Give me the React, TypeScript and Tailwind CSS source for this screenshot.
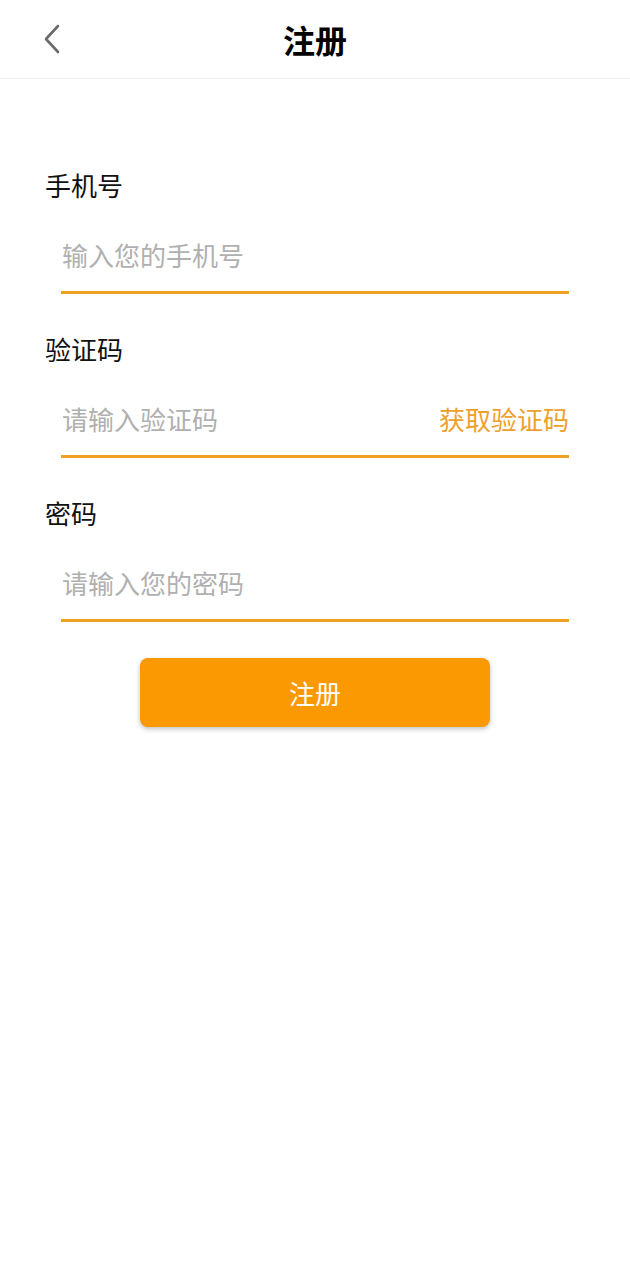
import React from "react";

const font = { fontFamily: '"Noto Sans CJK SC", "Noto Sans", sans-serif' };

function Field({ label, placeholder, action }: { label: string; placeholder: string; action?: string }) {
  return (
    <div className="flex flex-col">
      <div className="h-[36px] leading-[36px] text-[26px] text-[#111] pl-[45px]">{label}</div>
      <div className="mt-[34px] mx-[61px] flex items-center justify-between h-[36px]">
        <span className="text-[26px] text-[#b0b0b0] leading-[36px] pl-[1px]">{placeholder}</span>
        {action && <span className="text-[26px] text-[#eda12c] leading-[36px]">{action}</span>}
      </div>
      <div className="mt-[18px] mx-[61px] h-[3px] bg-[#f0a023]" />
    </div>
  );
}

export default function App() {
  return (
    <div className="w-[630px] h-[1280px] bg-white" style={font}>
      <div className="relative h-[79px] border-b border-[#efefef] flex items-center justify-center">
        <svg className="absolute left-[42px] top-[24px]" width="20" height="30" viewBox="0 0 20 30">
          <path d="M16 2 L4 15 L16 28" fill="none" stroke="#6b6b6b" strokeWidth="2.6" strokeLinecap="round" strokeLinejoin="round" />
        </svg>
        <span className="text-[32px] font-bold text-black leading-none">注册</span>
      </div>
      <div className="pt-[88px] flex flex-col gap-[37px]">
        <Field label="手机号" placeholder="输入您的手机号" />
        <Field label="验证码" placeholder="请输入验证码" action="获取验证码" />
        <Field label="密码" placeholder="请输入您的密码" />
      </div>
      <div className="mt-[36px] flex justify-center">
        <button className="w-[350px] h-[69px] rounded-[8px] bg-[#fb9903] text-white text-[26px] shadow-[0_2px_5px_rgba(0,0,0,0.25)]">
          注册
        </button>
      </div>
    </div>
  );
}
